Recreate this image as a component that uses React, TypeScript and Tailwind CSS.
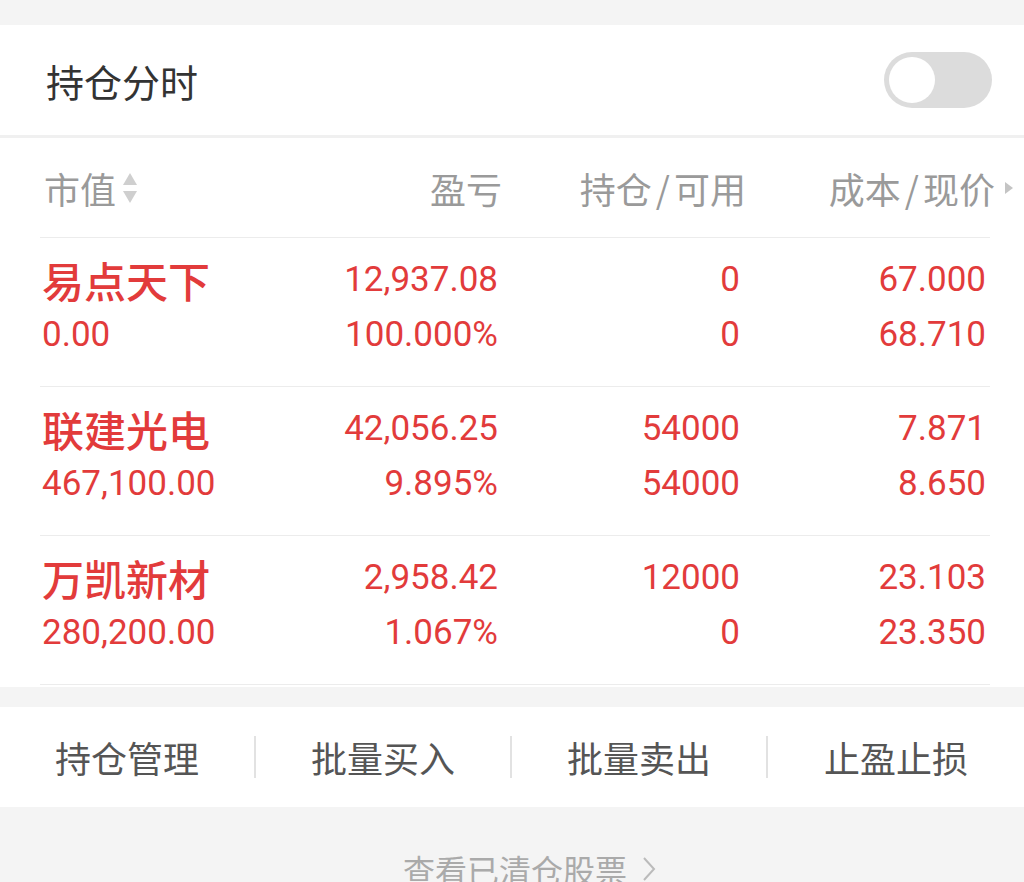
const stocks = [
  { name: '易点天下', value: '0.00', pl: '12,937.08', plPct: '100.000%', hold: '0', avail: '0', cost: '67.000', price: '68.710' },
  { name: '联建光电', value: '467,100.00', pl: '42,056.25', plPct: '9.895%', hold: '54000', avail: '54000', cost: '7.871', price: '8.650' },
  { name: '万凯新材', value: '280,200.00', pl: '2,958.42', plPct: '1.067%', hold: '12000', avail: '0', cost: '23.103', price: '23.350' },
]

const actions = ['持仓管理', '批量买入', '批量卖出', '止盈止损']

function SortIcon() {
  return (
    <svg width="18" height="36" viewBox="0 0 18 36" className="ml-[5px]">
      <path d="M9 3 L16 15 L2 15 Z" fill="#cfcfcf" />
      <path d="M2 21 L16 21 L9 33 Z" fill="#cfcfcf" />
    </svg>
  )
}

function Slash() {
  return <span className="mx-[4px]">/</span>
}

export default function App() {
  return (
    <div className="w-[1024px] h-[882px] overflow-hidden bg-[#f4f4f4] flex flex-col font-['Roboto','Noto_Sans_CJK_SC',sans-serif]">
      <div className="h-[25px] shrink-0" />

      {/* 持仓分时 */}
      <div className="h-[110px] shrink-0 bg-white flex items-center justify-between pl-[46px] pr-[32px]">
        <span className="text-[38px] text-[#333] font-['Noto_Sans_CJK_SC',sans-serif]">持仓分时</span>
        <div className="w-[108px] h-[56px] rounded-full bg-[#dcdcdc] p-[5px] flex items-center">
          <div className="w-[46px] h-[46px] rounded-full bg-white" />
        </div>
      </div>
      <div className="h-[3px] shrink-0 bg-[#f0f0f0]" />

      {/* header */}
      <div className="h-[99px] shrink-0 bg-white grid grid-cols-[248px_210px_244px_1fr] items-center pl-[44px] pr-[10px] text-[36px] text-[#9a9a9a] font-['Noto_Sans_CJK_SC',sans-serif]">
        <div className="flex items-center">
          <span>市值</span>
          <SortIcon />
        </div>
        <div className="text-right">盈亏</div>
        <div className="text-right">
          持仓<Slash />可用
        </div>
        <div className="flex items-center justify-end">
          <span>
            成本<Slash />现价
          </span>
          <svg width="10" height="14" viewBox="0 0 10 14" className="ml-[9px]">
            <path d="M1 1 L9 7 L1 13 Z" fill="#c4c4c4" />
          </svg>
        </div>
      </div>

      {/* rows */}
      <div className="shrink-0 bg-white pb-[2px]">
        <div className="ml-[40px] mr-[34px] border-b border-[#ececec]">
          {stocks.map(s => (
            <div
              key={s.name}
              className="h-[149px] border-t border-[#ececec] pt-[14px] grid grid-cols-[260px_198px_242px_1fr] text-[#e23b3b] text-[35px] leading-[55px]"
            >
              <div className="pl-[2px]">
                <div className="text-[42px] font-medium font-['Noto_Sans_CJK_SC',sans-serif]">{s.name}</div>
                <div>{s.value}</div>
              </div>
              <div className="text-right">
                <div>{s.pl}</div>
                <div>{s.plPct}</div>
              </div>
              <div className="text-right">
                <div>{s.hold}</div>
                <div>{s.avail}</div>
              </div>
              <div className="text-right pr-[4px]">
                <div>{s.cost}</div>
                <div>{s.price}</div>
              </div>
            </div>
          ))}
        </div>
      </div>

      <div className="h-[20px] shrink-0" />

      {/* actions */}
      <div className="h-[100px] shrink-0 bg-white flex items-center font-['Noto_Sans_CJK_SC',sans-serif]">
        {actions.map((a, i) => (
          <div key={a} className="flex-1 flex items-center">
            <div className="flex-1 text-center text-[36px] text-[#555]">{a}</div>
            {i < actions.length - 1 && <div className="w-[2px] h-[42px] bg-[#e2e2e2]" />}
          </div>
        ))}
      </div>

      {/* cleared stocks link */}
      <div className="flex-1 flex justify-center pt-[42px] pl-[36px]">
        <div className="flex items-center h-[40px] text-[32px] text-[#aaa] font-['Noto_Sans_CJK_SC',sans-serif]">
          <span>查看已清仓股票</span>
          <svg width="16" height="26" viewBox="0 0 16 26" className="ml-[14px]">
            <path d="M3 2 L13 13 L3 24" fill="none" stroke="#bbb" strokeWidth="2" />
          </svg>
        </div>
      </div>
    </div>
  )
}
